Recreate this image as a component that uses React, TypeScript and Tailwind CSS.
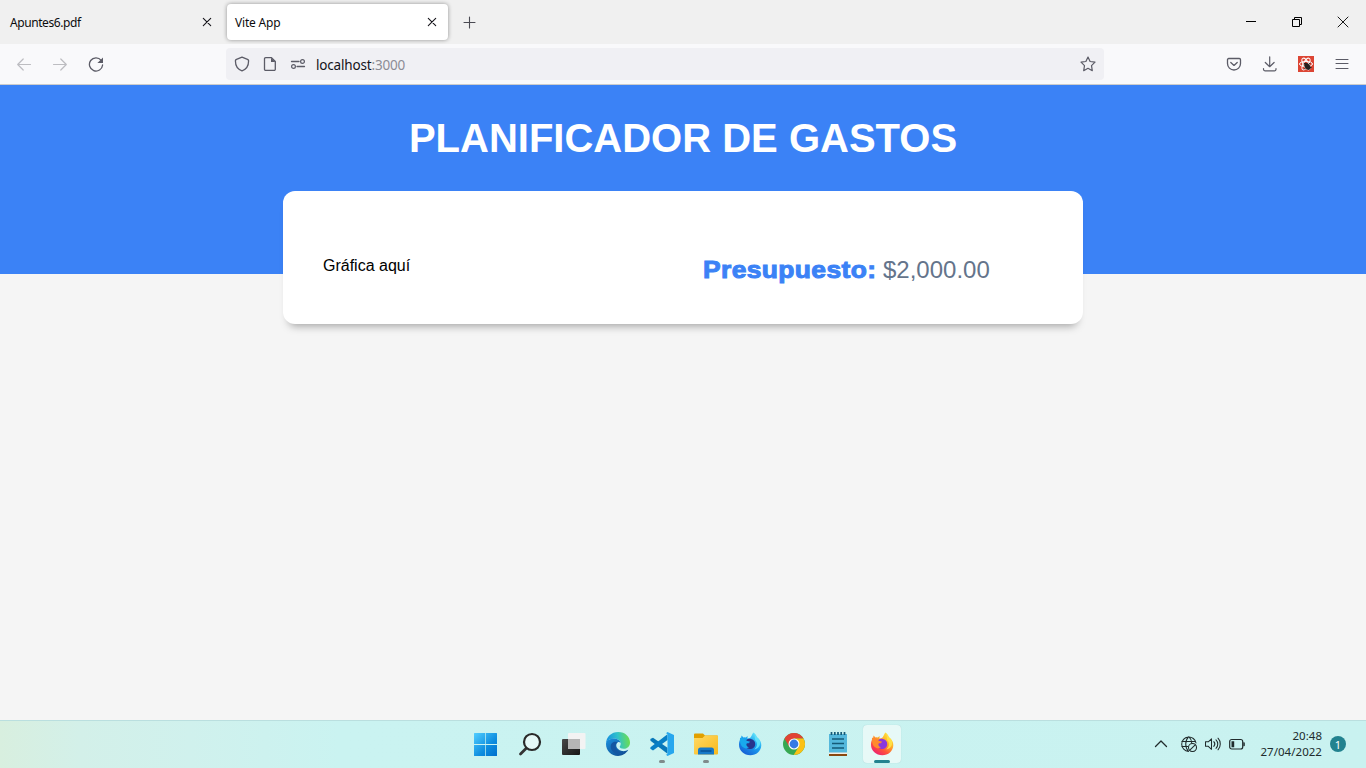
import type { ReactNode } from "react";

const line = { fill: "none", stroke: "currentColor", strokeLinecap: "round", strokeLinejoin: "round" } as const;

function Icon({ children, size = 16, className = "" }: { children: ReactNode; size?: number; className?: string }) {
  return (
    <svg width={size} height={size} viewBox={`0 0 ${size} ${size}`} className={`block shrink-0 ${className}`}>
      {children}
    </svg>
  );
}

function CloseTab() {
  return (
    <Icon className="text-[#15141a]">
      <path d="M4.3 4.3l7.400 7.400M11.700 4.300l-7.400 7.400" {...line} strokeWidth="1.1" />
    </Icon>
  );
}

function TabBar() {
  return (
    <header className="flex h-[44px] shrink-0 items-center bg-[#f0f0f0] text-[12px] text-[#0c0c0d]">
      <div className="flex h-full w-[227px] items-center justify-between pr-[12px] pl-[10px]">
        <span className="pt-[2px] tracking-[-0.42px]">Apuntes6.pdf</span>
        <CloseTab />
      </div>
      <div className="flex h-[36px] w-[221px] items-center justify-between rounded-[4px] bg-white pr-[8px] pl-[8px] shadow-[0_0_4px_rgba(0,0,0,0.4)]">
        <span className="pt-[2px] tracking-[-0.2px]">Vite App</span>
        <CloseTab />
      </div>
      <Icon className="ml-[14px] text-[#4a4a52]">
        <path d="M7.500 3v11M2 8.500h11" {...line} strokeWidth="1.100" />
      </Icon>
      <div className="ml-auto flex text-black">
        <div className="flex w-[46px] justify-center">
          <Icon><path d="M3 7.500h10" {...line} strokeLinecap="butt" /></Icon>
        </div>
        <div className="flex w-[46px] justify-center">
          <Icon>
            <path d="M3.500 5.500h7v7h-7zM5.500 5v-1.500h7v7H11" {...line} strokeLinejoin="miter" strokeLinecap="butt" />
          </Icon>
        </div>
        <div className="flex w-[46px] justify-center">
          <Icon><path d="M3 3l10 10M13 3L3 13" {...line} strokeWidth="0.900" /></Icon>
        </div>
      </div>
    </header>
  );
}

function NavBar() {
  return (
    <nav className="flex h-[41px] shrink-0 items-center border-b border-[#cccccc] bg-[#f9f9fb] text-[#5b5b66]">
      <div className="flex w-[226px] gap-[20px] pl-[16px]">
        <Icon className="text-[#bdbdc1]"><path d="M14.500 8.500H1.800M7.200 3L1.700 8.500 7.200 14" {...line} strokeWidth="1.200" /></Icon>
        <Icon className="text-[#bdbdc1]"><path d="M1.500 8.500h12.700M8.800 3l5.500 5.500L8.800 14" {...line} strokeWidth="1.200" /></Icon>
        <Icon>
          <path d="M13.200 4.300A6.600 6.600 0 1 0 14.600 9" {...line} strokeWidth="1.300" />
          <path d="M15 1.500v5.600H9.400z" fill="currentColor" />
        </Icon>
      </div>
      <div className="flex h-[32px] w-[878px] items-center rounded-[4px] bg-[#f0f0f4] px-[8px]">
        <Icon>
          <path d="M8 1.200l5.500 2.100c.7.300 1.100.700 1.100 1.500 0 4.800-2.400 8.600-6.600 10-4.200-1.400-6.600-5.200-6.600-10 0-.8.400-1.200 1.100-1.500z" {...line} strokeWidth="1.300" />
        </Icon>
        <Icon className="ml-[12px]">
          <path d="M3.700 1.700h5.800L13.300 5.500v7.700a1.200 1.200 0 0 1-1.200 1.200H3.700a1.200 1.200 0 0 1-1.200-1.200V2.900a1.200 1.200 0 0 1 1.200-1.200z" {...line} strokeWidth="1.300" />
          <path d="M9 1.700v4.300h4.300z" fill="currentColor" />
        </Icon>
        <Icon className="ml-[12px]">
          <path d="M1.500 5.500h7.500M7 10.500h7.500" {...line} strokeWidth="1.300" />
          <circle cx="12.500" cy="5.500" r="1.900" {...line} strokeWidth="1.200" />
          <circle cx="3.500" cy="10.500" r="1.900" {...line} strokeWidth="1.200" />
        </Icon>
        <span className="ml-[10px] pt-[2px] text-[13.500px] leading-[20px] tracking-[-0.170px] text-[#15141a]">
          localhost<span className="text-[#8c8c94]">:3000</span>
        </span>
        <Icon className="ml-auto">
          <path d="M8 1l2.100 4.500 4.900.6-3.500 3.500.8 5.100L8 12.300l-4.300 2.400.8-5.100L1 6.100l4.900-.6z" {...line} strokeWidth="1.200" />
        </Icon>
      </div>
      <div className="ml-auto flex gap-[20px] pr-[16px]">
        <Icon>
          <path d="M2.700 2.500h10.600a1.200 1.200 0 0 1 1.200 1.200v3.800a6.500 6.500 0 0 1-13 0V3.700a1.200 1.200 0 0 1 1.200-1.200zM4.800 6.500L8 9.400l3.200-2.900" {...line} strokeWidth="1.300" />
        </Icon>
        <Icon>
          <path d="M7.700 .8v9.500M3.300 6.500l4.400 4.200 4.400-4.200M1.500 12.500v.8a1.500 1.500 0 0 0 1.500 1.500h9.500a1.500 1.500 0 0 0 1.500-1.500v-.8" {...line} strokeWidth="1.200" />
        </Icon>
        <Icon>
          <path d="M0 0h16v16H0z" fill="#dc4534" />
          <g fill="none" stroke="#fff" strokeWidth="1">
            <ellipse cx="8" cy="8" rx="6.500" ry="2.600" />
            <ellipse cx="8" cy="8" rx="6.500" ry="2.600" transform="rotate(60 8 8)" />
            <ellipse cx="8" cy="8" rx="6.500" ry="2.600" transform="rotate(120 8 8)" />
          </g>
          <ellipse cx="9.500" cy="10.500" rx="2.600" ry="3.800" fill="#24201f" transform="rotate(-35 9.500 10.500)" />
          <path d="M5.500 8l2-1 .5 2M11 8l1.500-1M11.500 11.500h2M7.500 12l-1.500 1.500" stroke="#24201f" fill="none" />
        </Icon>
        <Icon><path d="M2 3.500h12M2 7.500h12M2 12.500h12" {...line} strokeWidth="1.100" /></Icon>
      </div>
    </nav>
  );
}

function Planner() {
  return (
    <main className="flex-1 bg-[#f5f5f5] font-['Liberation_Sans',Arial,sans-serif] text-black">
      <div className="h-[189px] bg-[#3b82f6] pt-[28px]">
        <h1 className="text-center text-[40px] leading-[50px] font-bold text-white">PLANIFICADOR DE GASTOS</h1>
        <section className="mx-auto mt-[28px] grid h-[133px] w-[800px] grid-cols-[380px_1fr] rounded-[12px] bg-white pt-[64px] pl-[40px] shadow-[0_8px_8px_-6px_rgba(0,0,0,0.35)]">
          <p className="text-[16px] leading-[22px]">Gráfica aquí</p>
          <p className="flex text-[24px] leading-[30px] whitespace-nowrap text-[#64748b]">
            <span className="w-[180px] text-[#3b82f6]">
              <strong className="inline-block origin-left scale-x-[1.1] font-bold tracking-[0.35px] [-webkit-text-stroke:1px_#3b82f6]">Presupuesto:</strong>
            </span>
            <span>$2,000.00</span>
          </p>
        </section>
      </div>
    </main>
  );
}

function WindowsLogo() {
  return (
    <Icon size={24}>
      <defs><linearGradient id="win" x2="1" y2="1"><stop stopColor="#51ceff" /><stop offset=".6" stopColor="#0d8ddf" /><stop offset="1" stopColor="#006fcd" /></linearGradient></defs>
      <path d="M0 1.500a.5.500 0 0 1 .5-.5H11.300v11H0zM12 1h10.500a.5.500 0 0 1 .5.500V12H12zM0 13h11.300v11H.5a.5.500 0 0 1-.5-.5zM12 13h11v10.500a.5.500 0 0 1-.5.500H12z" fill="url(#win)" />
    </Icon>
  );
}

function SearchLogo() {
  return (
    <Icon size={24}>
      <path d="M8.500 16L2.500 22" stroke="#343434" strokeWidth="2.800" strokeLinecap="round" />
      <circle cx="14" cy="10" r="8" fill="#e5f8f7" stroke="#292929" strokeWidth="2.200" />
    </Icon>
  );
}

function TaskViewLogo() {
  return (
    <Icon size={24}>
      <defs><linearGradient id="dark" y2="1"><stop stopColor="#474747" /><stop offset="1" stopColor="#161616" /></linearGradient></defs>
      <rect x="0" y="7" width="18" height="16" rx="1" fill="url(#dark)" />
      <rect x="6" y="1" width="17.500" height="16" rx="1" fill="#f3f3f3" />
      <path d="M6 7h12v10H6z" fill="#b5b5b5" />
    </Icon>
  );
}

function EdgeLogo() {
  return (
    <Icon size={24}>
      <defs>
        <linearGradient id="edgeTop" x1="0" y1=".5" x2="1" y2=".4"><stop stopColor="#168de0" /><stop offset=".5" stopColor="#2fc2cb" /><stop offset="1" stopColor="#6edf4c" /></linearGradient>
        <linearGradient id="edgeLow" x2=".8" y2="1"><stop stopColor="#1b91df" /><stop offset="1" stopColor="#104b91" /></linearGradient>
      </defs>
      <path d="M0 12C0 4.800 5.500 0 12.200 0 19.400 0 24 5 24 10.400c0 4-3 6.300-6.300 6.300-2.500 0-4-1-4-2 0-.8 1-1.200 1-3C14.700 9 12 6.600 8 6.600 3.700 6.600 0 9.500 0 12z" fill="url(#edgeTop)" />
      <path d="M0 12c0-3 3.500-5.400 7.800-5.400 3.300 0 6.200 1.700 6.800 4.300-1-.9-2-.9-2.700-.6C9.500 11.300 9 17.500 16 19c2.300.4 4.500-.2 6.300-1.200C20 21.700 16.200 24 12 24 5.400 24 0 18.700 0 12z" fill="url(#edgeLow)" />
      <path d="M11.900 10.300c-1.500.6-2.500 2.500-2.200 4.500.5 3.600 4 6.600 9 5.800C12 24.800 4.600 20.500 4.700 14.500c0-3.200 2.700-6.200 7.200-4.200z" fill="#1457a2" />
    </Icon>
  );
}

function CodeLogo() {
  return (
    <Icon size={24}>
      <path d="M.5 8.800L17.500 21.800v-6L3 5.700.3 7z" fill="#0877b9" />
      <path d="M.3 16.800L3 18.500 17.500 8V2.300L.5 15.300z" fill="#087fc6" />
      <path d="M17.500 0L24 3v18l-6.500 3-1.800-1.600c1 .5 1.800-.1 1.800-1.200V2.800c0-1.100-.8-1.700-1.800-1.200z" fill="#27a7ee" />
    </Icon>
  );
}

function FolderLogo() {
  return (
    <Icon size={24}>
      <defs><linearGradient id="folder" x2="1" y2="1"><stop stopColor="#ffd965" /><stop offset="1" stopColor="#f8b91b" /></linearGradient></defs>
      <path d="M0 2.500Q0 1.500 1 1.500h8l2 2h12q1 0 1 1V7H0z" fill="#e1a000" />
      <path d="M0 6h8.500l2.500-2.500h12q1 0 1 1v17q0 1-1 1H1q-1 0-1-1z" fill="url(#folder)" />
      <path d="M4 22.500V18q0-2.500 2.500-2.500h11Q20 15.500 20 18v4.500z" fill="#1679c8" />
      <path d="M7 19h10" stroke="#075196" strokeWidth="1.400" strokeLinecap="round" />
    </Icon>
  );
}

function FoxLogo({ blue = false }: { blue?: boolean }) {
  const fill = blue ? "url(#foxBlue)" : "url(#foxFire)";
  return (
    <Icon size={24}>
      <defs>
        <linearGradient id="foxBlue" x1=".9" x2=".2" y2="1"><stop stopColor="#7bf5fa" /><stop offset=".45" stopColor="#19a4f2" /><stop offset="1" stopColor="#1759d2" /></linearGradient>
        <linearGradient id="foxFire" x1=".9" x2=".2" y2="1"><stop stopColor="#fff044" /><stop offset=".4" stopColor="#ffae27" /><stop offset=".7" stopColor="#ff4e3d" /><stop offset="1" stopColor="#e91c7b" /></linearGradient>
      </defs>
      <path d="M15.300.5c2.200 1.700 3 3.400 3.500 5C22 7.800 23.400 10 23.300 13.200c-.2 6-5 10-11 10S1 18.600 1 12.700c0-2.900.7-5 2.200-7L3.500 3.500l2 2q1.200-.3 2.200 0l2-1.500-.3 2.400C13.500 7 13.300 3 15.300.5z" fill={fill} />
      <path d="M8 8.500c1-1.500 3-2.200 5-1.500 2.900.8 4.600 2.700 4.200 5.700-.4 2.900-2.700 4.500-5.500 4.200-3.200-.3-5-2.900-4.500-5.500 1-.6 2.900.3 4.700-.7-1.500-.4-1.900-1.700-3.900-2.200z" fill={blue ? "#27358c" : "#8b38dc"} />
      <path d="M2 5.700c3 0 4.800 1.300 6.500 3l3.800 1.100-3.700 1.700q-1 2.800 2.400 3.800l-3 1.200C3.700 15.600 1.500 12 2 5.700z" fill={blue ? "#19a9ed" : "#ff8a2e"} />
      <path d="M15.300.5c3 4.500.4 5.800 2.800 8.700 2 2.600.8 6-1.800 8.200 4.700-.8 6.300-5 5.800-8-.3-2.300-2-3.400-3.300-4.400C18.200 3 17 1.600 15.300.5z" fill={blue ? "#5fe0fb" : "#ffe044"} />
    </Icon>
  );
}

function ChromeLogo() {
  return (
    <Icon size={24}>
      <circle cx="12" cy="12" r="11" fill="#37a852" />
      <path d="M2.500 6.500A11 11 0 0 1 21.500 6.500H12L7.300 14.800z" fill="#e14335" />
      <path d="M12 6.500h9.500A11 11 0 0 1 11.700 23l5-8.300z" fill="#fbc116" />
      <circle cx="12" cy="12" r="5.500" fill="#fff" />
      <circle cx="12" cy="12" r="4.400" fill="#3679e5" />
    </Icon>
  );
}

function NotepadLogo() {
  return (
    <Icon size={24}>
      <path d="M3 20h18v3.500q0 .5-.5.500h-17q-.5 0-.5-.5z" fill="#8a4810" />
      <path d="M3 20h18v2H3z" fill="#f4eee5" />
      <path d="M3 2h18v18.500H3z" fill="#54b8dc" />
      <path d="M5.500 0v3M8.800 0v3M12 0v3M15.200 0v3M18.500 0v3M6 7h12M6 11.500h12M6 16h12" stroke="#145a77" strokeWidth="1.700" />
    </Icon>
  );
}

const apps: { name: string; icon: ReactNode; state?: "open" | "active" }[] = [
  { name: "start", icon: <WindowsLogo /> },
  { name: "search", icon: <SearchLogo /> },
  { name: "tasks", icon: <TaskViewLogo /> },
  { name: "edge", icon: <EdgeLogo /> },
  { name: "code", icon: <CodeLogo />, state: "open" },
  { name: "files", icon: <FolderLogo />, state: "open" },
  { name: "fox-dev", icon: <FoxLogo blue /> },
  { name: "chrome", icon: <ChromeLogo /> },
  { name: "notes", icon: <NotepadLogo /> },
  { name: "fox", icon: <FoxLogo />, state: "active" },
];

function TaskBar() {
  return (
    <footer className="flex h-[48px] shrink-0 border-t border-[#badfdf] bg-[linear-gradient(90deg,#d8efdf_0,#d3f0e9_80px,#d0f1ed_190px,#caf3f1_340px,#c9f2f0_100%)] pb-px text-[#202b2c]">
      <div className="flex w-[904px] items-center justify-end">
        {apps.map((app) => (
          <div key={app.name} className="flex w-[44px] justify-center">
            <div className={`relative flex h-[38px] w-[38px] items-center justify-center rounded-[4px] ${app.state === "active" ? "bg-[#e7f9f7] shadow-[0_0_1px_#9ecccc]" : ""}`}>
              {app.icon}
              {app.state === "open" && <i className="absolute bottom-0 h-[3px] w-[6px] rounded-full bg-[#7f8b8b]" />}
              {app.state === "active" && <i className="absolute bottom-0 h-[3px] w-[16px] rounded-full bg-[#22828f]" />}
            </div>
          </div>
        ))}
      </div>
      <div className="ml-auto flex items-center pr-[20px]">
        <Icon><path d="M2.500 10.500L8 5l5.500 5.500" {...line} strokeWidth="1.300" /></Icon>
        <Icon className="ml-[12px]">
          <g {...line} strokeWidth="1.050">
            <path d="M7.500 15.400A7.200 7.200 0 1 1 15 7M.8 5.500h13.800M.8 10.500h6M7.500.8C3.800 4.500 3.800 11.700 7.500 15.400M8 .8c2 1.800 2.600 4 2.700 6" />
            <circle cx="11.500" cy="11.500" r="4" />
            <path d="M8.800 14.200l5.400-5.400" />
          </g>
        </Icon>
        <Icon className="ml-[8px]">
          <g {...line} strokeWidth="1.050">
            <path d="M.5 5.800h2.800l3.200-3v10.500l-3.200-3H.5z" />
            <path d="M8.800 5.700a3.500 3.500 0 0 1 0 4.700M11 3.800a6 6 0 0 1 0 8.500M13 2.200a8.500 8.500 0 0 1 0 11.600" />
          </g>
        </Icon>
        <Icon className="ml-[8px]">
          <rect x=".7" y="3.500" width="13" height="9.500" rx="2" {...line} strokeWidth="1.200" />
          <path d="M2.500 5.300h2.700v6H2.500zM14.300 6.300h.7q.8 0 .8.800v2.300q0 .8-.8.800h-.7z" fill="currentColor" />
        </Icon>
        <div className="ml-[14px] w-[63px] shrink-0 text-right text-[11.500px] leading-[16px] tracking-[0.04px] whitespace-nowrap">
          <p>20:48</p>
          <p>27/04/2022</p>
        </div>
        <div className="ml-[8px] flex h-[16px] w-[16px] items-center justify-center rounded-full bg-[#22828f] text-[11px] leading-none text-white">1</div>
      </div>
    </footer>
  );
}

export default function App() {
  return (
    <div className="flex h-[768px] w-[1366px] flex-col overflow-hidden font-['Noto_Sans','Open_Sans',sans-serif]">
      <TabBar />
      <NavBar />
      <Planner />
      <TaskBar />
    </div>
  );
}
